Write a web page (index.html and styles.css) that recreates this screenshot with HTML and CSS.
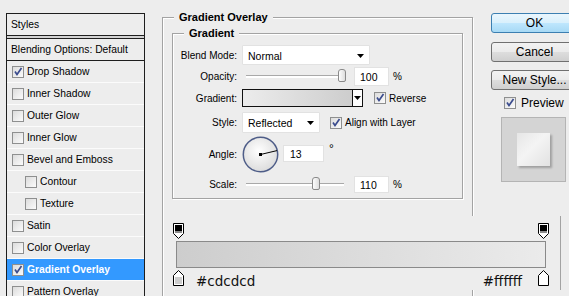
FILE: index.html
```html
<!DOCTYPE html>
<html lang="en">
<head>
    <meta charset="UTF-8">
    <title>Layer Style - Gradient Overlay</title>
    <link rel="stylesheet" href="styles.css">
</head>
<body>
<div class="dialog">
    <div class="styles">
        <div class="styles-head">Styles</div>
        <div class="styles-gap"></div>
        <div class="styles-blend">Blending Options: Default</div>
        <div class="style-row"><span class="cb on"><svg width="10" height="10" viewBox="0 0 10 10"><path d="M2 4.5l2 3l4.5-6.5" fill="none" stroke="#3b4c8e" stroke-width="1.7"/></svg></span>Drop Shadow</div>
        <div class="style-row"><span class="cb"></span>Inner Shadow</div>
        <div class="style-row"><span class="cb"></span>Outer Glow</div>
        <div class="style-row"><span class="cb"></span>Inner Glow</div>
        <div class="style-row"><span class="cb"></span>Bevel and Emboss</div>
        <div class="style-row sub"><span class="cb"></span>Contour</div>
        <div class="style-row sub"><span class="cb"></span>Texture</div>
        <div class="style-row"><span class="cb"></span>Satin</div>
        <div class="style-row"><span class="cb"></span>Color Overlay</div>
        <div class="style-row active"><span class="cb on"><svg width="10" height="10" viewBox="0 0 10 10"><path d="M2 4.5l2 3l4.5-6.5" fill="none" stroke="#3b4c8e" stroke-width="1.7"/></svg></span>Gradient Overlay</div>
        <div class="style-row"><span class="cb"></span>Pattern Overlay</div>
    </div>

    <fieldset class="group outer">
        <legend>Gradient Overlay</legend>
        <fieldset class="group inner">
            <legend>Gradient</legend>

            <div class="row r-blend">
                <label>Blend Mode:</label>
                <span class="select w-blend">Normal<svg width="7" height="4"><path d="M0 0h7l-3.5 4z"/></svg></span>
            </div>

            <div class="row r-opacity">
                <label>Opacity:</label>
                <span class="slider"><span class="thumb" style="left: 92px"></span></span>
                <span class="field w-num">100</span>
                <span class="unit">%</span>
            </div>

            <div class="row r-grad">
                <label>Gradient:</label>
                <span class="grad-pick"><span class="grad-fill"></span><span class="grad-arrow"><svg width="7" height="4"><path d="M0 0h7l-3.5 4z"/></svg></span></span>
                <span class="cb on cb-gap"><svg width="10" height="10" viewBox="0 0 10 10"><path d="M2 4.5l2 3l4.5-6.5" fill="none" stroke="#3b4c8e" stroke-width="1.7"/></svg></span>
                <span class="cb-text">Reverse</span>
            </div>

            <div class="row r-style">
                <label>Style:</label>
                <span class="select w-style">Reflected<svg width="7" height="4"><path d="M0 0h7l-3.5 4z"/></svg></span>
                <span class="cb on cb-gap2"><svg width="10" height="10" viewBox="0 0 10 10"><path d="M2 4.5l2 3l4.5-6.5" fill="none" stroke="#3b4c8e" stroke-width="1.7"/></svg></span>
                <span class="cb-text">Align with Layer</span>
            </div>

            <div class="row r-angle">
                <label>Angle:</label>
                <svg class="dial" width="37" height="37" viewBox="0 0 37 37">
                    <defs>
                        <radialGradient id="dialfill" cx="45%" cy="40%" r="60%">
                            <stop offset="0" stop-color="#ffffff"/>
                            <stop offset="1" stop-color="#dcdcdc"/>
                        </radialGradient>
                    </defs>
                    <circle cx="18.5" cy="18.5" r="17.2" fill="url(#dialfill)" stroke="#4e5d88" stroke-width="1.5"/>
                    <line x1="18.5" y1="18.5" x2="35" y2="14.6" stroke="#000" stroke-width="1"/>
                    <rect x="17" y="17" width="3" height="3" fill="#000"/>
                </svg>
                <span class="field w-angle">13</span>
                <span class="deg">°</span>
            </div>

            <div class="row r-scale">
                <label>Scale:</label>
                <span class="slider"><span class="thumb" style="left: 66px"></span></span>
                <span class="field w-num">110</span>
                <span class="unit">%</span>
            </div>
        </fieldset>
    </fieldset>

    <div class="side">
        <div class="btn btn-ok">OK</div>
        <div class="btn">Cancel</div>
        <div class="btn">New Style...</div>
        <div class="preview-check"><span class="cb on"><svg width="10" height="10" viewBox="0 0 10 10"><path d="M2 4.5l2 3l4.5-6.5" fill="none" stroke="#3b4c8e" stroke-width="1.7"/></svg></span><span>Preview</span></div>
        <div class="swatch"><div class="swatch-box"></div></div>
    </div>
</div>

<div class="editor">
    <div class="stops">
        <svg width="11" height="16" viewBox="0 0 11 16"><path d="M0.5 0.5h10v10l-5 5l-5-5z" fill="#fff" stroke="#000"/><rect x="2" y="2" width="7" height="6" fill="#000"/><rect x="2" y="8" width="7" height="2" fill="#8c8c8c"/></svg>
        <svg width="11" height="16" viewBox="0 0 11 16"><path d="M0.5 0.5h10v10l-5 5l-5-5z" fill="#fff" stroke="#000"/><rect x="2" y="2" width="7" height="6" fill="#000"/><rect x="2" y="8" width="7" height="2" fill="#8c8c8c"/></svg>
    </div>
    <div class="bar"></div>
    <div class="stops bottom">
        <svg width="11" height="16" viewBox="0 0 11 16"><path d="M5.5 0.5l5 5v10h-10v-10z" fill="#fff" stroke="#000"/><rect x="2" y="7" width="7" height="7" fill="#cdcdcd"/></svg>
        <span class="hex first">#cdcdcd</span>
        <span class="hex last">#ffffff</span>
        <svg width="11" height="16" viewBox="0 0 11 16"><path d="M5.5 0.5l5 5v10h-10v-10z" fill="#fff" stroke="#000"/><rect x="2" y="7" width="7" height="7" fill="#ffffff"/></svg>
    </div>
</div>
</body>
</html>
```

FILE: styles.css
```css
body {
    margin: 0;
    width: 569px;
    height: 296px;
    overflow: hidden;
    position: relative;
    background: #ededed;
    font-family: "Liberation Sans", Arial, sans-serif;
    font-size: 10px;
    color: #000;
}
.dialog {
    display: flex;
    align-items: flex-start;
    padding-left: 6px;
}

/* styles list */
.styles {
    box-sizing: border-box;
    width: 139px;
    flex: none;
    margin-top: 13px;
    border: 1px solid #1e1e1e;
    background: #ededed;
    font-size: 10.3px;
}
.styles-head {
    height: 21px;
    line-height: 21px;
    padding-left: 4px;
    border-bottom: 1px solid #1e1e1e;
}
.styles-gap {
    height: 2px;
    background: #d2d2d2;
}
.styles-blend {
    height: 21px;
    line-height: 21px;
    padding-left: 4px;
    border-top: 1px solid #1e1e1e;
    border-bottom: 1px solid #1e1e1e;
}
.style-row {
    display: flex;
    align-items: center;
    height: 21px;
    padding-left: 5px;
    border-bottom: 1px solid #fbfbfb;
}
.style-row.sub {
    padding-left: 18px;
}
.style-row.active {
    background: #3399ff;
    color: #fff;
    font-weight: bold;
}
.style-row .cb {
    margin-right: 3px;
}

/* checkbox */
.cb {
    display: inline-flex;
    align-items: center;
    justify-content: center;
    box-sizing: border-box;
    width: 12px;
    height: 12px;
    flex: none;
    border: 1px solid #8e8f8f;
    background: linear-gradient(135deg, #dcdcdc, #fbfbfb);
}

/* group boxes */
.group {
    margin: 0;
    min-width: 0;
    box-sizing: border-box;
    border: 1px solid #a3a3a3;
    box-shadow: inset 1px 1px 0 #fff, 1px 1px 0 #fff;
}
.group legend {
    font-size: 11px;
    font-weight: bold;
    line-height: 13px;
    background: #ededed;
}
.outer {
    flex: none;
    width: 311px;
    height: 320px;
    margin-top: 11px;
    margin-left: 17px;
    padding: 3px 9px 0;
}
.outer legend {
    margin-left: 2px;
    padding: 0 5px;
}
.inner {
    width: 291px;
    padding: 5px 0 5px;
}
.inner legend {
    margin-left: 11px;
    padding: 0 5px;
}

/* rows */
.row {
    display: flex;
    align-items: center;
}
.row label {
    width: 64px;
    flex: none;
    text-align: right;
    margin-right: 5px;
}
.r-blend { height: 20px; }
.r-opacity { height: 19px; margin-top: 2px; }
.r-grad { height: 18px; margin-top: 3px; }
.r-style { height: 21px; margin-top: 5px; }
.r-angle { height: 37px; margin-top: 3px; align-items: flex-start; }
.r-scale { height: 17px; margin-top: 3px; }
.r-angle label { align-self: center; }

.select {
    box-sizing: border-box;
    display: flex;
    align-items: center;
    justify-content: space-between;
    height: 100%;
    padding: 1px 5px 0 5px;
    background: #fff;
    border: 1px solid #e2e2e2;
    border-radius: 1px;
    font-size: 10.5px;
}
.w-blend { width: 128px; }
.w-style { width: 78px; }

.field {
    box-sizing: border-box;
    display: flex;
    align-items: center;
    height: 100%;
    padding-left: 5px;
    background: #fff;
    border: 1px solid #e2e2e2;
    font-size: 10.5px;
}
.w-num {
    width: 35px;
    margin-left: 10px;
}
.w-angle {
    width: 41px;
    height: 17px;
    margin-top: 9px;
    margin-left: 4px;
    padding-left: 6px;
}
.unit {
    margin-left: 4px;
}
.deg {
    margin-left: 5px;
    margin-top: 6px;
    font-size: 12px;
}

.slider {
    position: relative;
    width: 98px;
    height: 2px;
    margin-left: 4px;
    border-top: 1px solid #a9a9a9;
    background: #fff;
}
.thumb {
    position: absolute;
    top: -7px;
    width: 6px;
    height: 11px;
    border: 1px solid #8a8a8a;
    border-radius: 3px 3px 2px 2px;
    background: linear-gradient(to right, #fdfdfd, #dedede);
}

.grad-pick {
    box-sizing: border-box;
    display: flex;
    width: 121px;
    height: 100%;
    border: 1px solid #111;
}
.grad-fill {
    flex: 1;
    background: linear-gradient(to right, #ececec, #cdcdcd);
}
.grad-arrow {
    display: flex;
    align-items: center;
    justify-content: center;
    width: 9px;
    border-left: 1px solid #111;
    background: #fdfdfd;
}
.cb-gap { margin-left: 11px; }
.cb-gap2 { margin-left: 10px; }
.cb-text { margin-left: 3px; }

/* right column */
.side {
    display: flex;
    flex-direction: column;
    width: 87px;
    margin-left: 18px;
    margin-top: 13px;
    flex: none;
}
.btn {
    box-sizing: border-box;
    height: 20px;
    line-height: 18px;
    margin-bottom: 8px;
    text-align: center;
    font-size: 12px;
    border: 1px solid #707070;
    border-radius: 3px;
    background: linear-gradient(#f2f2f2, #ebebeb 48%, #dddddd 52%, #cfcfcf);
}
.btn-ok {
    border-color: #3c7fb1;
    background: linear-gradient(#eaf6fd, #d9f0fc 48%, #bee6fd 52%, #a7d9f5);
    margin-bottom: 9px;
}
.preview-check {
    display: flex;
    align-items: center;
    height: 12px;
    margin-top: -1px;
    padding-left: 13px;
    font-size: 12px;
}
.preview-check span + span {
    margin-left: 5px;
}
.swatch {
    box-sizing: border-box;
    display: flex;
    align-items: center;
    justify-content: center;
    width: 65px;
    height: 65px;
    margin-top: 8px;
    margin-left: 10px;
    background: #d4d4d4;
    border: 1px solid #b4b4b4;
}
.swatch-box {
    width: 33px;
    height: 33px;
    background: linear-gradient(135deg, #e6e6e6, #f4f4f4 45%, #e2e2e2);
    box-shadow: 2px 2px 2px rgba(0, 0, 0, 0.25);
}

/* gradient editor strip, lies over the dialog */
.editor {
    position: absolute;
    left: 164px;
    top: 216px;
    box-sizing: border-box;
    width: 397px;
    height: 74px;
    padding: 7px 11px 0 9px;
    background: #ededed;
    border-right: 1px solid #a3a3a3;
}
.stops {
    display: flex;
    justify-content: space-between;
    height: 16px;
}
.stops svg {
    display: block;
}
.bar {
    box-sizing: border-box;
    height: 27px;
    margin: 2px 3px 0;
    border: 1px solid #8a8a8a;
    background: linear-gradient(to right, #cdcdcd, #ebebeb);
}
.stops.bottom {
    margin-top: 2px;
    justify-content: flex-start;
}
.hex {
    font-family: "DejaVu Sans", sans-serif;
    font-size: 13.5px;
    line-height: 16px;
    margin-top: 3px;
    color: #111;
}
.hex.first {
    margin-left: 12px;
}
.hex.last {
    margin-left: auto;
    margin-right: 16px;
}
```
